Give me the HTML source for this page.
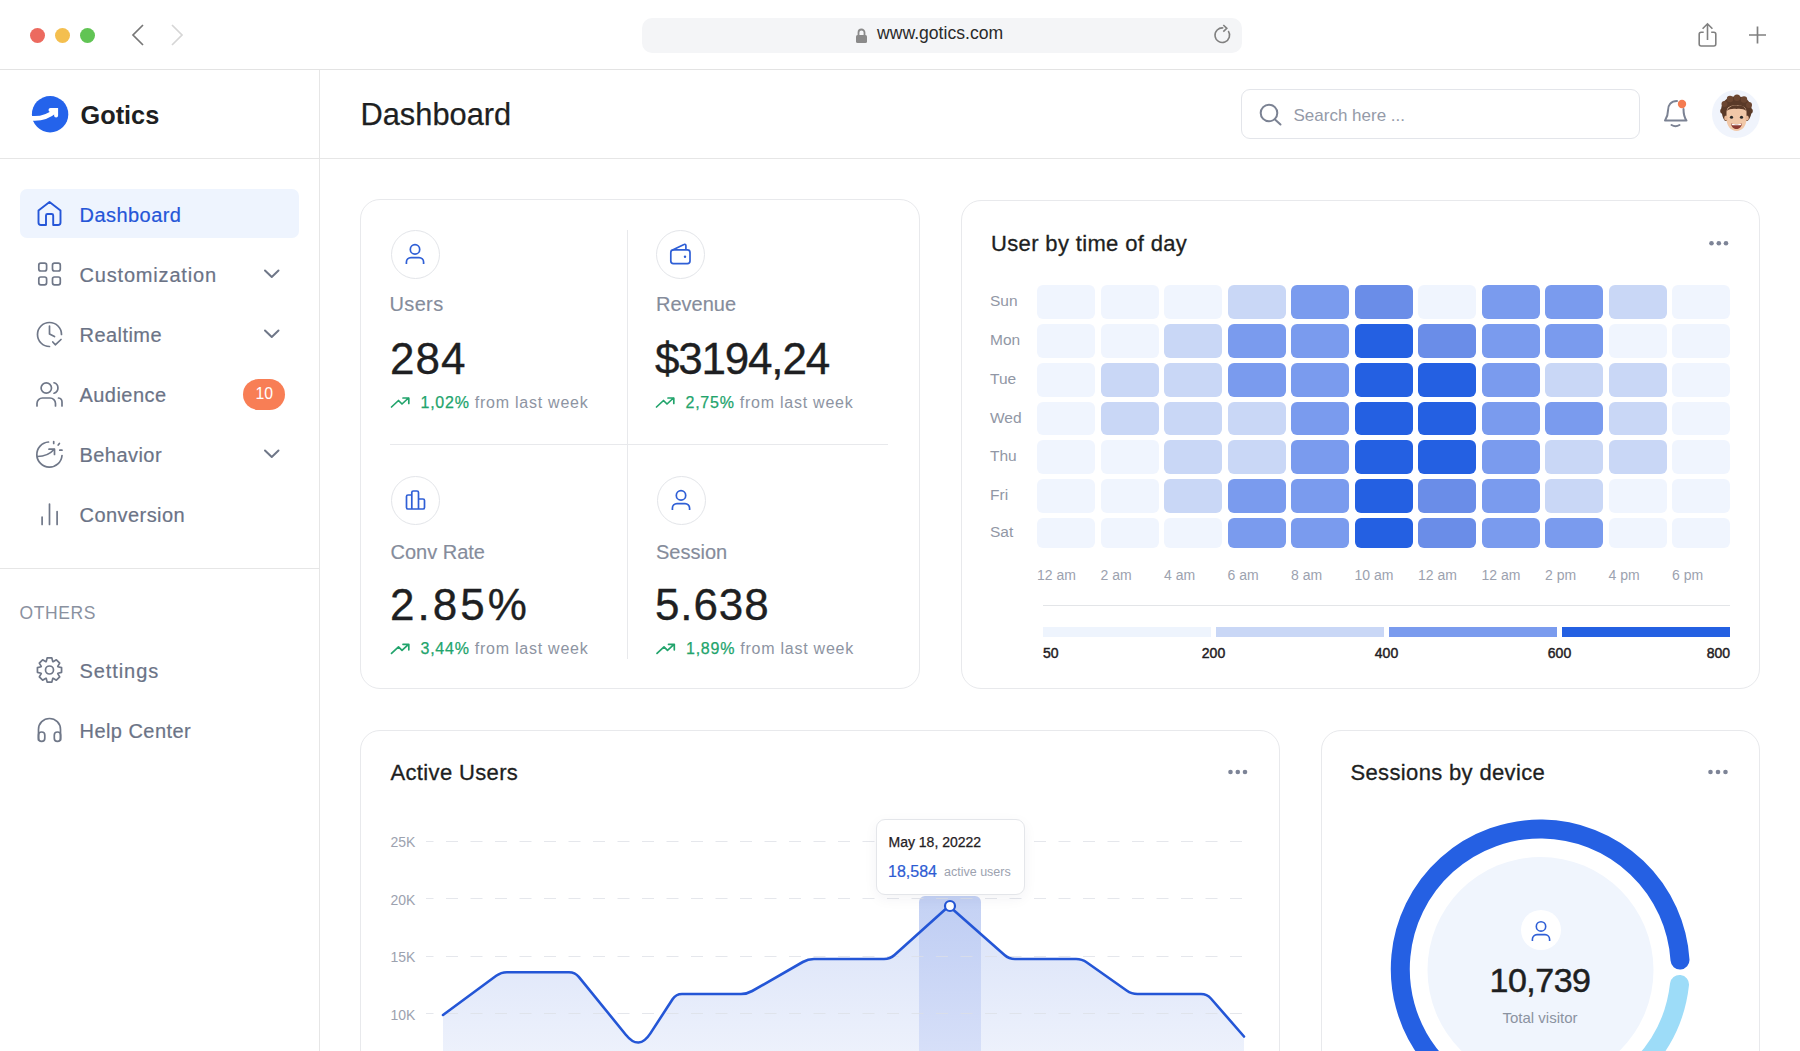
<!DOCTYPE html>
<html><head><meta charset="utf-8">
<style>
*{margin:0;padding:0;box-sizing:border-box}
html,body{width:1800px;height:1051px;overflow:hidden;background:#fff;font-family:"Liberation Sans",sans-serif;color:#1f2023}
.a{position:absolute}
.t{position:absolute;white-space:nowrap;line-height:1}
svg{position:absolute;overflow:visible}
.hl{position:absolute;background:#e6e7ea}
.card{position:absolute;border:1px solid #e8e9ec;border-radius:20px;background:#fff}
.nav{font-size:20px;color:#6b7386;letter-spacing:0.45px;-webkit-text-stroke:0.2px currentColor}
.ic{position:absolute;border:1px solid #e3e5e9;border-radius:50%;width:50px;height:50px;background:#fff}
.lbl{font-size:20px;color:#858c9b;-webkit-text-stroke:0.15px currentColor}
.val{font-size:44px;color:#1e1f22;-webkit-text-stroke:0.35px #1e1f22}
.tr{font-size:16px;color:#8d94a2;letter-spacing:0.75px}
.tr b{font-weight:normal;color:#22a46c;-webkit-text-stroke:0.25px #22a46c}
.cell{position:absolute;width:58.4px;height:34px;border-radius:6px}
.c0{background:#f0f5fe}.c1{background:#c9d7f6}.c2{background:#7a9bee}.c2b{background:#6a8de8}.c3{background:#2460e2}
.day{font-size:15.5px;color:#9197a5}
.tm{font-size:14px;color:#9ca2af}
.lg{font-size:14px;color:#1f2023;-webkit-text-stroke:0.45px #1f2023}
.yl{font-size:14px;color:#9ca2af}
.ttl{font-size:22px;color:#1e1f22;-webkit-text-stroke:0.3px #1e1f22;letter-spacing:0.35px}
</style></head>
<body>
<!-- ===== browser chrome ===== -->
<div class="a" style="left:30px;top:27.5px;width:15px;height:15px;border-radius:50%;background:#ec6a5f"></div>
<div class="a" style="left:55px;top:27.5px;width:15px;height:15px;border-radius:50%;background:#f4bf4f"></div>
<div class="a" style="left:80px;top:27.5px;width:15px;height:15px;border-radius:50%;background:#61c454"></div>
<svg style="left:0;top:0" width="1" height="1"><path d="M143 25 L133 35 L143 45" fill="none" stroke="#777" stroke-width="1.7"/><path d="M172 25 L182 35 L172 45" fill="none" stroke="#d6d6d6" stroke-width="1.7"/></svg>
<div class="a" style="left:642px;top:17.5px;width:600px;height:35px;border-radius:10px;background:#f4f5f7"></div>
<svg style="left:0;top:0" width="1" height="1"><rect x="856" y="35" width="11" height="8" rx="1.5" fill="#8a8a8a"/><path d="M858.5 35 V32.5 a3 3 0 0 1 6 0 V35" fill="none" stroke="#8a8a8a" stroke-width="1.8"/></svg>
<div class="t" style="left:877px;top:25px;font-size:17.6px;color:#2a2a2a">www.gotics.com</div>
<svg style="left:0;top:0" width="1" height="1"><path d="M1228.28 31.01 A7.3 7.3 0 1 1 1223.32 27.97" fill="none" stroke="#808080" stroke-width="1.6"/><path d="M1223.3 25 L1226.8 28.3 L1223.3 31.6" fill="none" stroke="#808080" stroke-width="1.6"/></svg>
<svg style="left:0;top:0" width="1" height="1" fill="none" stroke="#808080" stroke-width="1.6"><path d="M1703.7 32.3 H1701.2 a2 2 0 0 0 -2 2 V44 a2 2 0 0 0 2 2 H1713.8 a2 2 0 0 0 2 -2 V34.3 a2 2 0 0 0 -2 -2 H1711.2"/><path d="M1707.5 40 V24 M1702.6 28.8 L1707.5 23.8 L1712.4 28.8"/><path d="M1749 35 H1766 M1757.5 26.5 V43.5" stroke-width="1.7"/></svg>
<div class="hl" style="left:0;top:69px;width:1800px;height:1px;background:#e3e3e3"></div>

<!-- ===== header ===== -->
<svg style="left:0;top:0" width="1" height="1">
<circle cx="50.1" cy="114.2" r="18.2" fill="#2463eb"/>
<path d="M28 117.8 C38 119.5 48 117 55 111" fill="none" stroke="#fff" stroke-width="4.8"/>
<path d="M50.5 109.9 L56.1 109.9 L56.1 115.5" fill="none" stroke="#fff" stroke-width="4" stroke-linecap="round" stroke-linejoin="miter"/>
</svg>
<div class="t" style="left:80.5px;top:102.6px;font-size:25.3px;font-weight:bold;color:#1e1f22">Gotics</div>
<div class="t" style="left:360.5px;top:100px;font-size:30.8px;-webkit-text-stroke:0.25px #1e1f22;color:#1e1f22">Dashboard</div>
<div class="a" style="left:1241px;top:89px;width:399px;height:50px;border:1px solid #e3e5ea;border-radius:9px"></div>
<svg style="left:0;top:0" width="1" height="1"><circle cx="1269" cy="113" r="8.3" fill="none" stroke="#7b8293" stroke-width="2"/><path d="M1275 119.5 L1280.5 124.5" stroke="#7b8293" stroke-width="2" stroke-linecap="round"/></svg>
<div class="t" style="left:1293.5px;top:106.6px;font-size:17px;color:#949aa8">Search here ...</div>
<svg style="left:0;top:0" width="1" height="1"><path d="M1665 120.5 H1686.5 C1684 117 1683.5 114 1683.5 109 M1677 101 C1671 101 1668 105 1668 110.5 C1668 114.5 1667 117.5 1665 120.5" fill="none" stroke="#7b8293" stroke-width="2" stroke-linejoin="round" stroke-linecap="round"/><path d="M1671.5 125 Q1675.5 127.5 1679.5 125" fill="none" stroke="#7b8293" stroke-width="2" stroke-linecap="round"/><circle cx="1682" cy="104" r="4.2" fill="#f47b50"/></svg>
<div class="a" style="left:1711.5px;top:90px;width:48px;height:48px;border-radius:50%;background:#f0f4fc"></div>
<svg style="left:0;top:0" width="1" height="1">
<path d="M1722 114 C1719 104 1726 96 1736.5 96.5 C1747 96 1754 104 1751 115 C1750 118 1749 120 1747.5 121 L1725 121 C1723.5 119 1722.5 117 1722 114Z" fill="#5a3a28"/>
<circle cx="1724.5" cy="104" r="3" fill="#6b4631"/><circle cx="1730" cy="99" r="3.2" fill="#6b4631"/><circle cx="1737" cy="97.8" r="3.2" fill="#6b4631"/><circle cx="1744" cy="99.5" r="3.2" fill="#6b4631"/><circle cx="1749" cy="105" r="3" fill="#6b4631"/>
<circle cx="1723" cy="111" r="2.8" fill="#5a3a28"/><circle cx="1750" cy="111" r="2.8" fill="#5a3a28"/>
<path d="M1726.5 112 C1726.5 107 1731 105 1736.5 105 C1742 105 1746.5 107 1746.5 112 L1746.5 119 C1746.5 126 1742 131 1736.5 131 C1731 131 1726.5 126 1726.5 119 Z" fill="#f1c8a8"/>
<ellipse cx="1726" cy="118" rx="1.8" ry="2.6" fill="#e9b896"/><ellipse cx="1747" cy="118" rx="1.8" ry="2.6" fill="#e9b896"/>
<path d="M1726.5 111 C1729 106 1734 104.5 1738 105.5 C1742 104.5 1745 107 1746.5 111 C1744 109 1740 108.5 1736.5 109 C1733 108.5 1729 109 1726.5 111Z" fill="#5a3a28"/>
<ellipse cx="1731.5" cy="117.2" rx="1.6" ry="1.5" fill="#2a2a2a"/><ellipse cx="1741.5" cy="117.2" rx="1.6" ry="1.5" fill="#2a2a2a"/>
<path d="M1731 123.5 C1733 124.2 1740 124.2 1742 123.5 C1741.5 127.5 1739 129 1736.5 129 C1734 129 1731.5 127.5 1731 123.5Z" fill="#8e3b33"/>
<path d="M1731.6 123.7 C1734 124.3 1739 124.3 1741.4 123.7 L1741.2 125 C1739 125.4 1734 125.4 1731.8 125Z" fill="#fff"/>
</svg>
<div class="hl" style="left:0;top:158px;width:1800px;height:1px;background:#e6e6e6"></div>
<div class="hl" style="left:319px;top:70px;width:1px;height:981px;background:#e6e6e6"></div>

<!-- ===== sidebar ===== -->
<div class="a" style="left:20px;top:189px;width:279px;height:49px;border-radius:7px;background:#eef4fe"></div>
<div class="t nav" style="left:79.5px;top:204.8px;color:#2556d8">Dashboard</div>
<div class="t nav" style="left:79.5px;top:264.8px;letter-spacing:0.82px">Customization</div>
<div class="t nav" style="left:79.5px;top:324.8px">Realtime</div>
<div class="t nav" style="left:79.5px;top:384.8px">Audience</div>
<div class="t nav" style="left:79.5px;top:444.8px">Behavior</div>
<div class="t nav" style="left:79.5px;top:504.8px">Conversion</div>
<svg style="left:0;top:0" width="1" height="1" fill="none" stroke-linecap="round" stroke-linejoin="round">
<path d="M38.5 210.5 L49.5 202 L60.5 210.5 V222.5 a2.5 2.5 0 0 1 -2.5 2.5 H53.2 V215.5 a1.5 1.5 0 0 0 -1.5 -1.5 H47.5 a1.5 1.5 0 0 0 -1.5 1.5 V225 H41 a2.5 2.5 0 0 1 -2.5 -2.5 Z" stroke="#2556d8" stroke-width="1.9"/>
<g stroke="#6f7788" stroke-width="1.7">
<rect x="38.8" y="263.2" width="7.8" height="7.8" rx="2"/><rect x="52.5" y="263.2" width="7.8" height="7.8" rx="2"/>
<rect x="38.8" y="277" width="7.8" height="7.8" rx="2"/><rect x="52.5" y="277" width="7.8" height="7.8" rx="2"/>
<path d="M61.5 334.5 A12 12 0 1 0 49.5 346.5"/><path d="M49.5 326 V334 L54.5 336.5"/><path d="M52.8 342 L55.3 344.8 L61 339.5"/>
<circle cx="46.3" cy="388" r="5.2"/><path d="M54 382.8 A5.4 5.4 0 0 1 54 393.2"/><path d="M37 406 V403.5 A5.5 5.5 0 0 1 42.5 398 H50 A5.5 5.5 0 0 1 55.5 403.5 V406"/><path d="M58.5 398 A4 4 0 0 1 62 402 V406"/>
<path d="M48.5 442 A12.6 12.6 0 1 0 62 455.5"/><path d="M37.5 456.5 C44 456.5 50 454 54 449.5"/><path d="M49 449.2 H54.5 V454.5"/><path d="M53.7 441.5 V443.5 M58.2 445 L59.4 443.5 M59.8 450.2 H62"/>
<path d="M42.1 517 V524.5 M49.5 504 V524.5 M57.1 511.5 V524.5"/>
<path d="M265 270.5 L271.75 277 L278.5 270.5 M265 330.5 L271.75 337 L278.5 330.5 M265 450.5 L271.75 457 L278.5 450.5" stroke="#6f7788" stroke-width="2"/>
</g></svg>
<div class="a" style="left:243px;top:379px;width:41.5px;height:30.5px;border-radius:15.5px;background:#f87e55"></div>
<div class="t" style="left:255.5px;top:386.2px;font-size:15.8px;color:#fff">10</div>
<div class="hl" style="left:0;top:568px;width:319px;height:1px;background:#e6e6e6"></div>
<div class="t" style="left:19.5px;top:605px;font-size:17.5px;color:#8a91a0;letter-spacing:0.6px">OTHERS</div>
<div class="t nav" style="left:79.5px;top:660.6px;letter-spacing:0.92px">Settings</div>
<div class="t nav" style="left:79.5px;top:720.6px">Help Center</div>
<svg style="left:0;top:0" width="1" height="1" fill="none" stroke="#6f7788" stroke-width="1.7" stroke-linecap="round" stroke-linejoin="round">
<path d="M47.15 657.93 L51.85 657.93 L52.78 661.62 L53.11 661.76 L56.38 659.80 L59.70 663.12 L57.74 666.39 L57.88 666.72 L61.57 667.65 L61.57 672.35 L57.88 673.28 L57.74 673.61 L59.70 676.88 L56.38 680.20 L53.11 678.24 L52.78 678.38 L51.85 682.07 L47.15 682.07 L46.22 678.38 L45.89 678.24 L42.62 680.20 L39.30 676.88 L41.26 673.61 L41.12 673.28 L37.43 672.35 L37.43 667.65 L41.12 666.72 L41.26 666.39 L39.30 663.12 L42.62 659.80 L45.89 661.76 L46.22 661.62 Z"/>
<circle cx="49.5" cy="670" r="4"/>
<path d="M38.5 740 V729.5 A11 11 0 0 1 60.5 729.5 V740"/><rect x="38.5" y="732" width="6.3" height="9.4" rx="3.1"/><rect x="54.3" y="732" width="6.3" height="9.4" rx="3.1"/>
</svg>


<!-- ===== main ===== -->
<div class="card" style="left:360px;top:199px;width:560px;height:490px"></div>
<div class="hl" style="left:627px;top:229.5px;width:1px;height:429px;background:#e8e9ec"></div>
<div class="hl" style="left:390px;top:444px;width:498px;height:1px;background:#e8e9ec"></div>
<div class="ic" style="left:390.5px;top:229.5px;width:49px;height:49px"></div>
<div class="ic" style="left:655.5px;top:229.5px;width:49px;height:49px"></div>
<div class="ic" style="left:390.5px;top:475.5px;width:49px;height:49px"></div>
<div class="ic" style="left:656.5px;top:475.5px;width:49px;height:49px"></div>
<svg style="left:0;top:0" width="1" height="1">
<circle cx="415" cy="249.4" r="4.7" fill="none" stroke="#2f5fd6" stroke-width="1.7"/><path d="M406.4 264 V262.2 a4.6 4.6 0 0 1 4.6 -4.6 h8 a4.6 4.6 0 0 1 4.6 4.6 V264" fill="none" stroke="#2f5fd6" stroke-width="1.7" stroke-linecap="butt"/>
<circle cx="681" cy="495.4" r="4.7" fill="none" stroke="#2f5fd6" stroke-width="1.7"/><path d="M672.4 510 V508.2 a4.6 4.6 0 0 1 4.6 -4.6 h8 a4.6 4.6 0 0 1 4.6 4.6 V510" fill="none" stroke="#2f5fd6" stroke-width="1.7" stroke-linecap="butt"/>
<g fill="none" stroke="#2f5fd6" stroke-width="1.7" stroke-linejoin="round">
<rect x="670.8" y="249.8" width="19.2" height="13.8" rx="2.6"/>
<path d="M672.5 250 L684 244.4 a1.3 1.3 0 0 1 1.9 1.2 V249.8"/>
<path d="M406.5 507.5 V496.5 a1.5 1.5 0 0 1 1.5 -1.5 H411.8 V492.5 a1.5 1.5 0 0 1 1.5 -1.5 H417 a1.5 1.5 0 0 1 1.5 1.5 V499 H423 a1.5 1.5 0 0 1 1.5 1.5 V507.5 a1.5 1.5 0 0 1 -1.5 1.5 H408 a1.5 1.5 0 0 1 -1.5 -1.5 Z M411.8 495 V509 M418.5 499 V509"/>
</g>
<circle cx="685" cy="256.7" r="1.2" fill="#2f5fd6"/>

<path d="M391.5 407.0 L398.5 400.5 L402 404.0 L408.5 398.0 M403 398.0 H408.8 V403.5" fill="none" stroke="#22a46c" stroke-width="1.7" stroke-linecap="round" stroke-linejoin="round"/><path d="M656.5 407.0 L663.5 400.5 L667 404.0 L673.5 398.0 M668 398.0 H673.8 V403.5" fill="none" stroke="#22a46c" stroke-width="1.7" stroke-linecap="round" stroke-linejoin="round"/><path d="M391.5 653.3 L398.5 646.8 L402 650.3 L408.5 644.3 M403 644.3 H408.8 V649.8" fill="none" stroke="#22a46c" stroke-width="1.7" stroke-linecap="round" stroke-linejoin="round"/><path d="M657.0 653.3 L664.0 646.8 L667.5 650.3 L674.0 644.3 M668.5 644.3 H674.3 V649.8" fill="none" stroke="#22a46c" stroke-width="1.7" stroke-linecap="round" stroke-linejoin="round"/></svg>
<div class="t lbl" style="left:389.5px;top:294.3px;letter-spacing:0.35px">Users</div>
<div class="t lbl" style="left:656px;top:294.3px">Revenue</div>
<div class="t lbl" style="left:390.5px;top:541.7px">Conv Rate</div>
<div class="t lbl" style="left:656px;top:541.7px">Session</div>
<div class="t val" style="left:390px;top:337.1px;letter-spacing:1px">284</div>
<div class="t val" style="left:655px;top:337.1px;letter-spacing:-1.2px">$3194,24</div>
<div class="t val" style="left:390px;top:583.3px;letter-spacing:3px">2.85%</div>
<div class="t val" style="left:655px;top:583.3px;letter-spacing:0.9px">5.638</div>
<div class="t tr" style="left:420.5px;top:394.9px"><b>1,02%</b> from last week</div>
<div class="t tr" style="left:685.5px;top:394.9px"><b>2,75%</b> from last week</div>
<div class="t tr" style="left:420.5px;top:641.3px"><b>3,44%</b> from last week</div>
<div class="t tr" style="left:686px;top:641.3px"><b>1,89%</b> from last week</div>
<div class="card" style="left:961px;top:200px;width:799px;height:489px"></div>
<div class="t ttl" style="left:991px;top:232.5px">User by time of day</div>
<svg style="left:0;top:0" width="1" height="1"><circle cx="1711.5" cy="243.3" r="2.3" fill="#7d8497"/><circle cx="1718.8" cy="243.3" r="2.3" fill="#7d8497"/><circle cx="1726" cy="243.3" r="2.3" fill="#7d8497"/></svg>
<div class="t day" style="left:990px;top:293.3px">Sun</div>
<div class="cell c0" style="left:1037.0px;top:285.3px;height:33.5px"></div>
<div class="cell c0" style="left:1100.5px;top:285.3px;height:33.5px"></div>
<div class="cell c0" style="left:1164.0px;top:285.3px;height:33.5px"></div>
<div class="cell c1" style="left:1227.5px;top:285.3px;height:33.5px"></div>
<div class="cell c2" style="left:1291.0px;top:285.3px;height:33.5px"></div>
<div class="cell c2b" style="left:1354.5px;top:285.3px;height:33.5px"></div>
<div class="cell c0" style="left:1418.0px;top:285.3px;height:33.5px"></div>
<div class="cell c2" style="left:1481.5px;top:285.3px;height:33.5px"></div>
<div class="cell c2" style="left:1545.0px;top:285.3px;height:33.5px"></div>
<div class="cell c1" style="left:1608.5px;top:285.3px;height:33.5px"></div>
<div class="cell c0" style="left:1672.0px;top:285.3px;height:33.5px"></div>
<div class="t day" style="left:990px;top:332.0px">Mon</div>
<div class="cell c0" style="left:1037.0px;top:324.0px;height:33.5px"></div>
<div class="cell c0" style="left:1100.5px;top:324.0px;height:33.5px"></div>
<div class="cell c1" style="left:1164.0px;top:324.0px;height:33.5px"></div>
<div class="cell c2" style="left:1227.5px;top:324.0px;height:33.5px"></div>
<div class="cell c2" style="left:1291.0px;top:324.0px;height:33.5px"></div>
<div class="cell c3" style="left:1354.5px;top:324.0px;height:33.5px"></div>
<div class="cell c2b" style="left:1418.0px;top:324.0px;height:33.5px"></div>
<div class="cell c2" style="left:1481.5px;top:324.0px;height:33.5px"></div>
<div class="cell c2" style="left:1545.0px;top:324.0px;height:33.5px"></div>
<div class="cell c0" style="left:1608.5px;top:324.0px;height:33.5px"></div>
<div class="cell c0" style="left:1672.0px;top:324.0px;height:33.5px"></div>
<div class="t day" style="left:990px;top:371.1px">Tue</div>
<div class="cell c0" style="left:1037.0px;top:363.1px;height:33.5px"></div>
<div class="cell c1" style="left:1100.5px;top:363.1px;height:33.5px"></div>
<div class="cell c1" style="left:1164.0px;top:363.1px;height:33.5px"></div>
<div class="cell c2" style="left:1227.5px;top:363.1px;height:33.5px"></div>
<div class="cell c2" style="left:1291.0px;top:363.1px;height:33.5px"></div>
<div class="cell c3" style="left:1354.5px;top:363.1px;height:33.5px"></div>
<div class="cell c3" style="left:1418.0px;top:363.1px;height:33.5px"></div>
<div class="cell c2" style="left:1481.5px;top:363.1px;height:33.5px"></div>
<div class="cell c1" style="left:1545.0px;top:363.1px;height:33.5px"></div>
<div class="cell c1" style="left:1608.5px;top:363.1px;height:33.5px"></div>
<div class="cell c0" style="left:1672.0px;top:363.1px;height:33.5px"></div>
<div class="t day" style="left:990px;top:409.7px">Wed</div>
<div class="cell c0" style="left:1037.0px;top:401.7px;height:33.5px"></div>
<div class="cell c1" style="left:1100.5px;top:401.7px;height:33.5px"></div>
<div class="cell c1" style="left:1164.0px;top:401.7px;height:33.5px"></div>
<div class="cell c1" style="left:1227.5px;top:401.7px;height:33.5px"></div>
<div class="cell c2" style="left:1291.0px;top:401.7px;height:33.5px"></div>
<div class="cell c3" style="left:1354.5px;top:401.7px;height:33.5px"></div>
<div class="cell c3" style="left:1418.0px;top:401.7px;height:33.5px"></div>
<div class="cell c2" style="left:1481.5px;top:401.7px;height:33.5px"></div>
<div class="cell c2" style="left:1545.0px;top:401.7px;height:33.5px"></div>
<div class="cell c1" style="left:1608.5px;top:401.7px;height:33.5px"></div>
<div class="cell c0" style="left:1672.0px;top:401.7px;height:33.5px"></div>
<div class="t day" style="left:990px;top:448.4px">Thu</div>
<div class="cell c0" style="left:1037.0px;top:440.4px;height:33.5px"></div>
<div class="cell c0" style="left:1100.5px;top:440.4px;height:33.5px"></div>
<div class="cell c1" style="left:1164.0px;top:440.4px;height:33.5px"></div>
<div class="cell c1" style="left:1227.5px;top:440.4px;height:33.5px"></div>
<div class="cell c2" style="left:1291.0px;top:440.4px;height:33.5px"></div>
<div class="cell c3" style="left:1354.5px;top:440.4px;height:33.5px"></div>
<div class="cell c3" style="left:1418.0px;top:440.4px;height:33.5px"></div>
<div class="cell c2" style="left:1481.5px;top:440.4px;height:33.5px"></div>
<div class="cell c1" style="left:1545.0px;top:440.4px;height:33.5px"></div>
<div class="cell c1" style="left:1608.5px;top:440.4px;height:33.5px"></div>
<div class="cell c0" style="left:1672.0px;top:440.4px;height:33.5px"></div>
<div class="t day" style="left:990px;top:487.3px">Fri</div>
<div class="cell c0" style="left:1037.0px;top:479.3px;height:33.5px"></div>
<div class="cell c0" style="left:1100.5px;top:479.3px;height:33.5px"></div>
<div class="cell c1" style="left:1164.0px;top:479.3px;height:33.5px"></div>
<div class="cell c2" style="left:1227.5px;top:479.3px;height:33.5px"></div>
<div class="cell c2" style="left:1291.0px;top:479.3px;height:33.5px"></div>
<div class="cell c3" style="left:1354.5px;top:479.3px;height:33.5px"></div>
<div class="cell c2b" style="left:1418.0px;top:479.3px;height:33.5px"></div>
<div class="cell c2" style="left:1481.5px;top:479.3px;height:33.5px"></div>
<div class="cell c1" style="left:1545.0px;top:479.3px;height:33.5px"></div>
<div class="cell c0" style="left:1608.5px;top:479.3px;height:33.5px"></div>
<div class="cell c0" style="left:1672.0px;top:479.3px;height:33.5px"></div>
<div class="t day" style="left:990px;top:524.2px">Sat</div>
<div class="cell c0" style="left:1037.0px;top:517.9px;height:30px"></div>
<div class="cell c0" style="left:1100.5px;top:517.9px;height:30px"></div>
<div class="cell c0" style="left:1164.0px;top:517.9px;height:30px"></div>
<div class="cell c2" style="left:1227.5px;top:517.9px;height:30px"></div>
<div class="cell c2" style="left:1291.0px;top:517.9px;height:30px"></div>
<div class="cell c3" style="left:1354.5px;top:517.9px;height:30px"></div>
<div class="cell c2b" style="left:1418.0px;top:517.9px;height:30px"></div>
<div class="cell c2" style="left:1481.5px;top:517.9px;height:30px"></div>
<div class="cell c2" style="left:1545.0px;top:517.9px;height:30px"></div>
<div class="cell c0" style="left:1608.5px;top:517.9px;height:30px"></div>
<div class="cell c0" style="left:1672.0px;top:517.9px;height:30px"></div>
<div class="t tm" style="left:1037.0px;top:567.7px">12 am</div>
<div class="t tm" style="left:1100.5px;top:567.7px">2 am</div>
<div class="t tm" style="left:1164.0px;top:567.7px">4 am</div>
<div class="t tm" style="left:1227.5px;top:567.7px">6 am</div>
<div class="t tm" style="left:1291.0px;top:567.7px">8 am</div>
<div class="t tm" style="left:1354.5px;top:567.7px">10 am</div>
<div class="t tm" style="left:1418.0px;top:567.7px">12 am</div>
<div class="t tm" style="left:1481.5px;top:567.7px">12 am</div>
<div class="t tm" style="left:1545.0px;top:567.7px">2 pm</div>
<div class="t tm" style="left:1608.5px;top:567.7px">4 pm</div>
<div class="t tm" style="left:1672.0px;top:567.7px">6 pm</div>
<div class="hl" style="left:1043px;top:605px;width:687px;height:1px;background:#e3e5e8"></div>
<div class="a" style="left:1043px;top:627px;width:168px;height:9.5px;background:#eef4fd"></div>
<div class="a" style="left:1216px;top:627px;width:168px;height:9.5px;background:#c9d7f6"></div>
<div class="a" style="left:1389px;top:627px;width:168px;height:9.5px;background:#7a9bee"></div>
<div class="a" style="left:1562px;top:627px;width:168px;height:9.5px;background:#2460e2"></div>
<div class="t lg" style="left:1043px;top:645.9px">50</div>
<div class="t lg" style="left:1163.5px;width:100px;text-align:center;top:645.9px">200</div>
<div class="t lg" style="left:1336.5px;width:100px;text-align:center;top:645.9px">400</div>
<div class="t lg" style="left:1509.5px;width:100px;text-align:center;top:645.9px">600</div>
<div class="t lg" style="left:1630px;width:100px;text-align:right;top:645.9px">800</div>
<div class="card" style="left:360px;top:730px;width:920px;height:400px"></div>
<div class="t ttl" style="left:390.5px;top:761.5px">Active Users</div>
<svg style="left:0;top:0" width="1" height="1"><circle cx="1230.5" cy="772" r="2.3" fill="#7d8497"/><circle cx="1237.8" cy="772" r="2.3" fill="#7d8497"/><circle cx="1245" cy="772" r="2.3" fill="#7d8497"/></svg>
<div class="t yl" style="left:390.5px;top:835px">25K</div>
<div class="t yl" style="left:390.5px;top:892.5px">20K</div>
<div class="t yl" style="left:390.5px;top:950px">15K</div>
<div class="t yl" style="left:390.5px;top:1007.5px">10K</div>
<svg style="left:0;top:0" width="1800" height="1051">
<defs>
<linearGradient id="fg" x1="0" y1="0" x2="0" y2="1" gradientUnits="objectBoundingBox"><stop offset="0" stop-color="#d9e2f8"/><stop offset="1" stop-color="#eef2fc"/></linearGradient>
<linearGradient id="hg" x1="0" y1="0" x2="0" y2="1"><stop offset="0" stop-color="#b9c9f2"/><stop offset="1" stop-color="#d4ddf8"/></linearGradient>
</defs>

<path d="M443 1015 L496.2 975.8 Q501 972.2 507.0 972.2 L569.0 972.2 Q575 972.2 578.8 976.9 L625.8 1034.7 Q639 1051 650.4 1033.4 L672.7 999.0 Q676 994 682.0 994.0 L741.0 994.0 Q747 994 752.2 991.0 L802.8 962.0 Q808 959 814.0 959.0 L884.0 959.0 Q890 959 894.5 955.0 L949 906 L1004.5 955.0 Q1009 959 1015.0 959.0 L1076.0 959.0 Q1082 959 1086.9 962.5 L1126.6 990.5 Q1131.5 994 1137.5 994.0 L1201.0 994.0 Q1207 994 1210.9 998.5 L1244 1036.5 L1244 1060 L443 1060 Z" fill="url(#fg)"/>
<path d="M919 1060 V902 a6 6 0 0 1 6 -6 H975 a6 6 0 0 1 6 6 V1060 Z" fill="url(#hg)" opacity="0.85"/>
<line x1="426" y1="841.5" x2="1249" y2="841.5" stroke="#dcdfe5" stroke-opacity="0.75" stroke-width="1" stroke-dasharray="12 12.5" stroke-dashoffset="4.5"/><line x1="426" y1="898.5" x2="1249" y2="898.5" stroke="#dcdfe5" stroke-opacity="0.75" stroke-width="1" stroke-dasharray="12 12.5" stroke-dashoffset="4.5"/><line x1="426" y1="956.5" x2="1249" y2="956.5" stroke="#dcdfe5" stroke-opacity="0.75" stroke-width="1" stroke-dasharray="12 12.5" stroke-dashoffset="4.5"/><line x1="426" y1="1013.5" x2="1249" y2="1013.5" stroke="#dcdfe5" stroke-opacity="0.75" stroke-width="1" stroke-dasharray="12 12.5" stroke-dashoffset="4.5"/>
<path d="M443 1015 L496.2 975.8 Q501 972.2 507.0 972.2 L569.0 972.2 Q575 972.2 578.8 976.9 L625.8 1034.7 Q639 1051 650.4 1033.4 L672.7 999.0 Q676 994 682.0 994.0 L741.0 994.0 Q747 994 752.2 991.0 L802.8 962.0 Q808 959 814.0 959.0 L884.0 959.0 Q890 959 894.5 955.0 L949 906 L1004.5 955.0 Q1009 959 1015.0 959.0 L1076.0 959.0 Q1082 959 1086.9 962.5 L1126.6 990.5 Q1131.5 994 1137.5 994.0 L1201.0 994.0 Q1207 994 1210.9 998.5 L1244 1036.5" fill="none" stroke="#2456d6" stroke-width="2.6" stroke-linejoin="round" stroke-linecap="round"/>
<circle cx="950" cy="906" r="5" fill="#fff" stroke="#2456d6" stroke-width="2.2"/>
</svg>
<div class="a" style="left:876px;top:818.5px;width:148.5px;height:76.5px;border:1px solid #e4e6ea;border-radius:9px;background:#fff;box-shadow:0 4px 14px rgba(30,40,70,0.05)"></div>
<div class="t" style="left:888.5px;top:834.6px;font-size:14px;color:#1f2023;-webkit-text-stroke:0.25px #1f2023">May 18, 20222</div>
<div class="t" style="left:888px;top:863.5px;font-size:16px;color:#2d5bd3;-webkit-text-stroke:0.2px #2d5bd3">18,584</div>
<div class="t" style="left:944px;top:866.4px;font-size:12.5px;color:#9ca2af">active users</div>

<div class="card" style="left:1321px;top:730px;width:439px;height:400px"></div>
<div class="t ttl" style="left:1350.5px;top:761.5px">Sessions by device</div>
<svg style="left:0;top:0" width="1" height="1"><circle cx="1710.5" cy="772" r="2.3" fill="#7d8497"/><circle cx="1718" cy="772" r="2.3" fill="#7d8497"/><circle cx="1725.5" cy="772" r="2.3" fill="#7d8497"/></svg>
<svg style="left:0;top:0" width="1800" height="1051">
<circle cx="1540.5" cy="970" r="113" fill="#f0f5fd"/>
<path d="M1680.0 960.0 A140 140 0 1 0 1516.0 1106.9" fill="none" stroke="#2560e3" stroke-width="19" stroke-linecap="round"/>
<path d="M1679.5 984.4 A140 140 0 0 1 1564.6 1106.9" fill="none" stroke="#9ddcf8" stroke-width="19" stroke-linecap="round"/>
<circle cx="1541" cy="930" r="20" fill="#fff"/>
<circle cx="1541" cy="926.4" r="4.7" fill="none" stroke="#2f5fd6" stroke-width="1.6"/><path d="M1532.4 941 V939.2 a4.6 4.6 0 0 1 4.6 -4.6 h8 a4.6 4.6 0 0 1 4.6 4.6 V941" fill="none" stroke="#2f5fd6" stroke-width="1.6"/>
</svg>
<div class="t" style="left:1440px;width:200px;text-align:center;top:963.4px;font-size:34px;color:#1e1f22;letter-spacing:-0.5px;-webkit-text-stroke:0.5px #1e1f22">10,739</div>
<div class="t" style="left:1440px;width:200px;text-align:center;top:1009.9px;font-size:15px;color:#8b93a1">Total visitor</div>


</body></html>
